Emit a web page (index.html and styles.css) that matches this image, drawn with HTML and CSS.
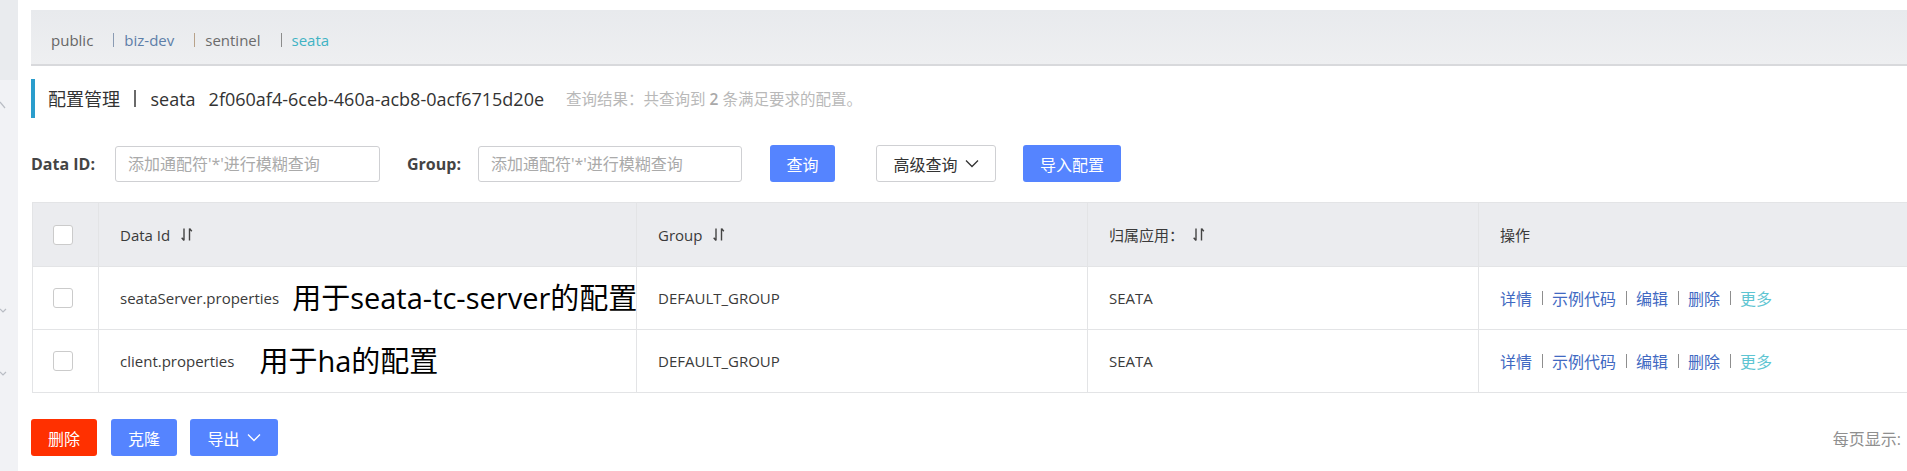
FILE: index.html
```html
<!DOCTYPE html>
<html lang="zh-CN">
<head>
<meta charset="utf-8">
<title>配置管理</title>
<link rel="stylesheet" href="styles.css">
</head>
<body>
<div class="app">
  <aside class="sidebar">
    <div class="sb-top"></div>
    <svg class="sb-mark sb-mark-1" width="8" height="10" viewBox="0 0 8 10"><polyline points="0,1 5,7" /></svg>
    <svg class="sb-mark sb-mark-2" width="8" height="8" viewBox="0 0 8 8"><polyline points="0,2 3,5 6,2" /></svg>
    <svg class="sb-mark sb-mark-3" width="8" height="8" viewBox="0 0 8 8"><polyline points="0,2 3,5 6,2" /></svg>
  </aside>
  <main class="main">
    <div class="ns-bar">
      <span class="ns ns-public">public</span>
      <span class="ns-sep sep-blue"></span><span class="ns ns-biz">biz-dev</span>
      <span class="ns-sep sep-orange"></span><span class="ns ns-sentinel">sentinel</span>
      <span class="ns-sep sep-gray"></span><span class="ns ns-active">seata</span>
    </div>

    <div class="page-title">
      <span class="t-main">配置管理</span>
      <span class="t-sep"></span>
      <span class="t-ns">seata</span>
      <span class="t-id">2f060af4-6ceb-460a-acb8-0acf6715d20e</span>
      <span class="t-result">查询结果：共查询到 <strong>2</strong> 条满足要求的配置。</span>
    </div>

    <div class="search">
      <label class="s-label s-label-id">Data ID:</label>
      <input class="s-input s-input-id" type="text" placeholder="添加通配符'*'进行模糊查询">
      <label class="s-label s-label-group">Group:</label>
      <input class="s-input s-input-group" type="text" placeholder="添加通配符'*'进行模糊查询">
      <button class="btn btn-primary btn-query">查询</button>
      <button class="btn btn-normal btn-adv">高级查询<svg class="chev" width="14" height="9" viewBox="0 0 14 9"><polyline points="1,1.5 7,7.5 13,1.5" /></svg></button>
      <button class="btn btn-primary btn-import">导入配置</button>
    </div>

    <div class="table">
      <div class="tr th">
        <div class="cell cell-check"><span class="checkbox"></span></div>
        <div class="cell">Data Id<svg class="sort" width="12" height="15" viewBox="0 0 12 15"><path d="M3 1.5V13.5M3 13.5L0.7 10.8M8.5 1.5V13.5M8.5 1.5L10.8 4.2" /></svg></div>
        <div class="cell">Group<svg class="sort" width="12" height="15" viewBox="0 0 12 15"><path d="M3 1.5V13.5M3 13.5L0.7 10.8M8.5 1.5V13.5M8.5 1.5L10.8 4.2" /></svg></div>
        <div class="cell cjk">归属应用：<svg class="sort sort-tight" width="12" height="15" viewBox="0 0 12 15"><path d="M3 1.5V13.5M3 13.5L0.7 10.8M8.5 1.5V13.5M8.5 1.5L10.8 4.2" /></svg></div>
        <div class="cell cjk">操作</div>
      </div>
      <div class="tr row">
        <div class="cell cell-check"><span class="checkbox"></span></div>
        <div class="cell">seataServer.properties<span class="note note-1">用于seata-tc-server的配置</span></div>
        <div class="cell">DEFAULT_GROUP</div>
        <div class="cell">SEATA</div>
        <div class="cell ops">
          <span class="op">详情</span><span class="op-sep"></span><span class="op">示例代码</span><span class="op-sep"></span><span class="op">编辑</span><span class="op-sep"></span><span class="op">删除</span><span class="op-sep"></span><span class="op op-more">更多</span>
        </div>
      </div>
      <div class="tr row">
        <div class="cell cell-check"><span class="checkbox"></span></div>
        <div class="cell">client.properties<span class="note note-2">用于ha的配置</span></div>
        <div class="cell">DEFAULT_GROUP</div>
        <div class="cell">SEATA</div>
        <div class="cell ops">
          <span class="op">详情</span><span class="op-sep"></span><span class="op">示例代码</span><span class="op-sep"></span><span class="op">编辑</span><span class="op-sep"></span><span class="op">删除</span><span class="op-sep"></span><span class="op op-more">更多</span>
        </div>
      </div>
    </div>

    <div class="footer">
      <button class="btn btn-danger btn-del">删除</button>
      <button class="btn btn-primary btn-clone">克隆</button>
      <button class="btn btn-primary btn-export">导出<svg class="chev" width="14" height="9" viewBox="0 0 14 9"><polyline points="1,1.5 7,7.5 13,1.5" /></svg></button>
      <span class="pager-label">每页显示:</span>
    </div>
  </main>
</div>
</body>
</html>
```

FILE: styles.css
```css
* { box-sizing: border-box; }

html, body {
  margin: 0;
  padding: 0;
  background: #ffffff;
}

body {
  font-family: "Open Sans", "Noto Sans CJK SC", sans-serif;
  font-size: 15px;
  color: #333333;
}

.app {
  display: flex;
  width: 1907px;
  height: 471px;
  overflow: hidden;
}

/* ---------- sidebar ---------- */
.sidebar {
  width: 18px;
  flex: none;
  background: #f1f2f5;
  display: flex;
  flex-direction: column;
}

.sb-top {
  height: 80px;
  background: #e9ebee;
}

.sb-mark {
  display: block;
  fill: none;
  stroke: #b9bdc4;
  stroke-width: 1.2;
}

.sb-mark-1 { margin-top: 21px; }
.sb-mark-2 { margin-top: 196px; }
.sb-mark-3 { margin-top: 55px; }

/* ---------- main ---------- */
.main {
  flex: 1;
  min-width: 0;
  padding: 10px 0 0 13px;
}

.ns-bar {
  height: 56px;
  padding: 6px 0 0 20px;
  display: flex;
  align-items: center;
  background: linear-gradient(#e8eaed, #eeeff1);
  border-bottom: 2px solid #d8d9dc;
  white-space: nowrap;
}

.ns {
  font-size: 15px;
  line-height: 20px;
}

.ns-public { color: #666666; }
.ns-biz { color: #5d7ea8; }
.ns-sentinel { color: #6b6b6b; }
.ns-active { color: #3fb3c4; }

.ns-sep {
  display: inline-block;
  width: 1px;
  height: 14px;
  margin: 0 10px 0 20px;
  background: #8a8a8a;
}

.sep-blue { background: #8a9bb3; }
.sep-orange { background: #b8a28a; }
.sep-gray { background: #8c8c8c; }

/* ---------- title ---------- */
.page-title {
  margin-top: 13px;
  height: 39px;
  display: flex;
  align-items: center;
  padding-left: 13px;
  border-left: 4px solid #2a9dcc;
  white-space: nowrap;
  color: #333333;
}

.t-main {
  font-size: 18px;
  line-height: 24px;
}

.t-sep {
  display: inline-block;
  width: 1.5px;
  height: 17px;
  margin: 0 15px 0 14px;
  background: #6a6a6a;
}

.t-ns {
  font-size: 18px;
  line-height: 24px;
}

.t-id {
  font-size: 18px;
  line-height: 24px;
  margin-left: 13px;
}

.t-result {
  margin-left: 22px;
  font-size: 15.5px;
  color: #b9b9b9;
}

.t-result strong {
  font-weight: 600;
  color: #a9a9a9;
}

/* ---------- search ---------- */
.search {
  margin-top: 27px;
  height: 37px;
  display: flex;
  align-items: center;
  white-space: nowrap;
}

.s-label {
  font-weight: 700;
  font-size: 16px;
  color: #444444;
}

.s-label-id { width: 84px; }
.s-label-group { width: 71px; margin-left: 27px; }

.s-input {
  height: 36px;
  padding: 0 0 0 12px;
  border: 1px solid #cfd0d3;
  border-radius: 3px;
  font-family: "Open Sans", "Noto Sans CJK SC", sans-serif;
  font-size: 16px;
  color: #333333;
  background: #ffffff;
  outline: none;
}

.s-input::placeholder { color: #aaaaaa; }

.s-input-id { width: 265px; }
.s-input-group { width: 264px; }

.btn {
  height: 37px;
  border: none;
  border-radius: 3px;
  font-family: "Open Sans", "Noto Sans CJK SC", sans-serif;
  font-size: 16px;
  display: inline-flex;
  align-items: center;
  justify-content: center;
  padding: 0;
  cursor: pointer;
}

.btn-primary { background: #5584ff; color: #ffffff; }
.btn-danger { background: #ff3000; color: #ffffff; }
.btn-normal {
  background: #ffffff;
  color: #333333;
  border: 1px solid #cfd0d3;
}

.chev {
  fill: none;
  stroke: currentColor;
  stroke-width: 1.3;
  margin-left: 7px;
}

.btn-query { width: 65px; margin-left: 28px; }
.btn-adv { width: 120px; margin-left: 41px; }
.btn-import { width: 98px; margin-left: 27px; }

/* ---------- table ---------- */
.table {
  margin: 20px 0 0 1px;
  border-top: 1px solid #e3e4e6;
  border-left: 1px solid #e3e4e6;
  border-bottom: 1px solid #e3e4e6;
}

.tr {
  display: grid;
  grid-template-columns: 65px 538px 451px 391px 1fr;
}

.th {
  height: 63px;
  background: #ebecef;
}

.row {
  height: 63px;
  border-top: 1px solid #e3e4e6;
}

.cell {
  display: flex;
  align-items: center;
  padding-left: 21px;
  white-space: nowrap;
  font-size: 15px;
  color: #3a3a3a;
  min-width: 0;
}

.cell + .cell { border-left: 1px solid #e3e4e6; }

.cell-check { padding-left: 20px; }

.cjk { font-size: 15px; }

.checkbox {
  display: block;
  width: 20px;
  height: 20px;
  border: 1px solid #cbcbcb;
  border-radius: 3px;
  background: #ffffff;
}

.sort {
  fill: none;
  stroke: #444444;
  stroke-width: 1.4;
  margin-left: 11px;
}

.sort-tight { margin-left: 9px; }

.note {
  font-family: "Open Sans", "Noto Sans CJK SC", sans-serif;
  font-size: 29px;
  line-height: 34px;
  color: #000000;
}

.note-1 { margin-left: 13px; }
.note-2 { margin-left: 25px; }

.ops { font-size: 16px; }

.op { color: #4169c2; }
.op-more { color: #5ec5d2; }

.op-sep {
  display: inline-block;
  width: 1px;
  height: 14px;
  margin: 0 9px 0 10px;
  background: #8e8e8e;
}

/* ---------- footer ---------- */
.footer {
  margin-top: 26px;
  height: 37px;
  display: flex;
  align-items: center;
  padding-right: 6px;
  white-space: nowrap;
}

.btn-del { width: 66px; }
.btn-clone { width: 66px; margin-left: 14px; }
.btn-export { width: 88px; margin-left: 13px; }

.pager-label {
  margin-left: auto;
  font-size: 16px;
  color: #8f8f8f;
}
```
